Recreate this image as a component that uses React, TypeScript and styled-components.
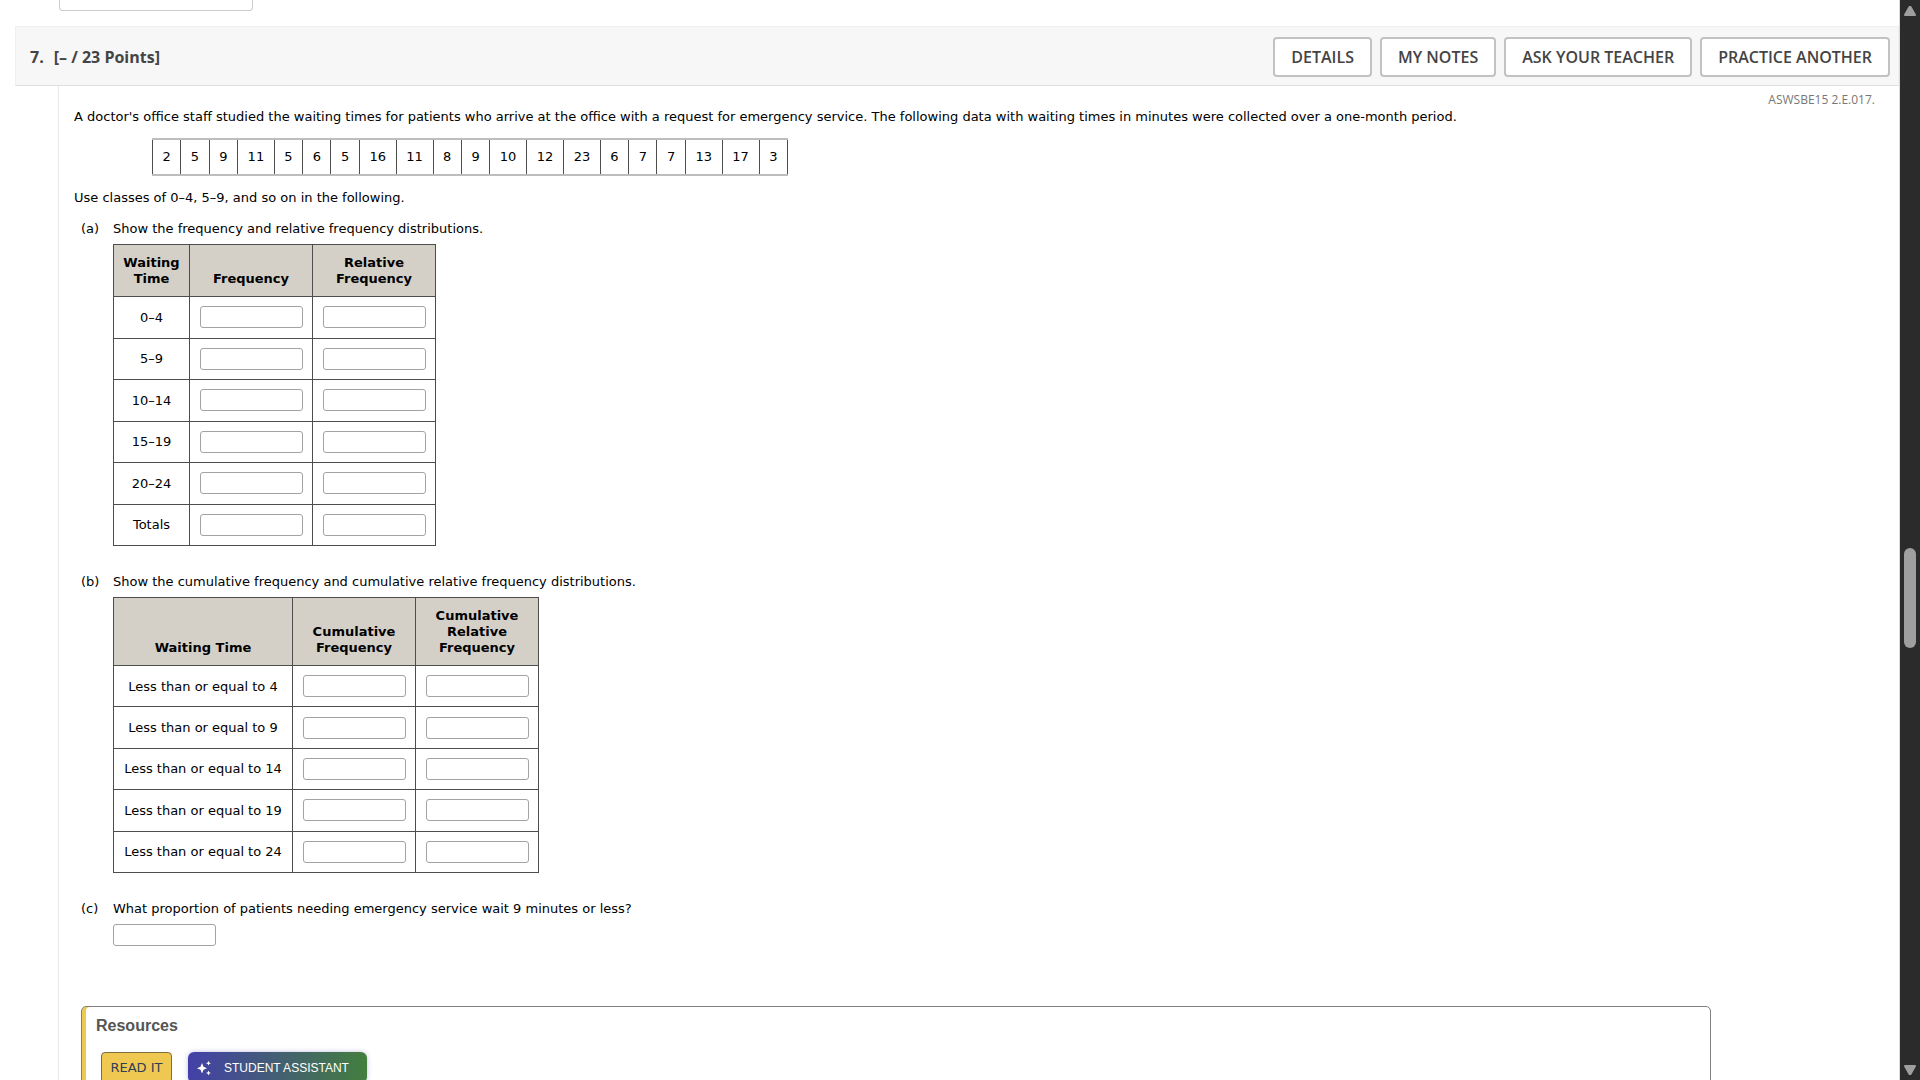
import React from "react";
import styled, { createGlobalStyle } from "styled-components";

const GlobalStyle = createGlobalStyle`
  *, *::before, *::after { box-sizing: border-box; }
  html, body, #root { height: 100%; }
  body {
    margin: 0;
    overflow: hidden;
    background: #fff;
    color: #000;
    font: 13px/16px Verdana, "DejaVu Sans", sans-serif;
  }
`;

const Page = styled.div`
  display: flex;
  height: 100vh;
  overflow: hidden;
`;

const Main = styled.main`
  flex: 1;
  min-width: 0;
  overflow: hidden;
  padding-left: 15px;
  border-right: 1px solid #dcdcdc;
`;

const PreviousAnswer = styled.input`
  display: block;
  width: 194px;
  height: 11px;
  margin: 0 0 15px 44px;
  border: 1px solid #ccc;
  border-top: 0;
  border-radius: 0 0 4px 4px;
  outline: 0;
`;

const QuestionHeader = styled.header`
  display: flex;
  align-items: center;
  justify-content: space-between;
  height: 60px;
  padding: 2px 8px 0 14px;
  background: #f7f7f7;
  border: 1px solid #f0f0f0;
  border-bottom-color: #e0e0e0;
`;

const Title = styled.h2`
  display: flex;
  gap: 10px;
  margin: 0;
  color: #444;
  font: bold 16px/22px "Open Sans", sans-serif;
`;

const Actions = styled.div`
  display: flex;
  gap: 8px;
`;

const ActionButton = styled.button`
  height: 40px;
  padding: 0 16px;
  border: 2px solid #c2c2c2;
  border-radius: 4px;
  background: #fff;
  color: #444;
  font: 600 16px/22px "Open Sans", sans-serif;
`;

const Question = styled.section`
  min-height: 1000px;
  margin-left: 43px;
  padding: 5px 24px 0 15px;
  border-left: 1px solid #e8e8e8;
`;

const Source = styled.div`
  color: #777;
  text-align: right;
  font: 12px/18px "Open Sans", sans-serif;
`;

const Text = styled.p`
  margin: 0;
`;

const Grid = styled.table`
  border-collapse: collapse;
  text-align: center;

  th, td {
    border: 1px solid #4d4d4d;
  }
`;

const DataTable = styled(Grid)`
  width: 636px;
  height: 38px;
  margin: 13px 0 14px 78px;

  td {
    padding: 0 9px;
    border-top: 2px solid #bdbdbd;
    border-bottom: 2px solid #bdbdbd;
  }
`;

const Parts = styled.ol`
  margin: 15px 0 0;
  padding: 0 0 0 7px;
  list-style: none;
`;

const Part = styled.li`
  display: grid;
  grid-template-columns: 32px 1fr;
  margin-bottom: 28px;
`;

const AnswerTable = styled(Grid)<{ $height: number }>`
  height: ${(p) => p.$height}px;
  margin-top: 7px;

  td { padding: 0 9px; }

  thead th {
    padding: 10px 9px 9px;
    background: #d4d0c8;
    font-weight: bold;
    vertical-align: bottom;
  }

  tbody th {
    padding: 1px 9px 0;
    font-weight: normal;
  }

  tbody tr { height: 41px; }
`;

const HeadCell = styled.th<{ $width: number }>`
  width: ${(p) => p.$width}px;
`;

const Answer = styled.input`
  display: block;
  width: 103px;
  height: 22px;
  margin: 0 auto;
  padding: 1px 4px;
  border: 1px solid #a3a3a3;
  border-radius: 3px;
  background: #fff;
  font: inherit;
`;

const PartAnswer = styled(Answer)`
  margin: 7px 0 0;
`;

const Resources = styled.section`
  height: 120px;
  margin: 60px 164px 0 7px;
  padding: 9px 14px;
  border: 1px solid #7f7f7f;
  border-radius: 5px;
  box-shadow: inset 4px 0 0 #efc851;
`;

const ResourcesTitle = styled.h3`
  margin: 0 0 16px;
  color: #555;
  font: bold 16px/20px "Liberation Sans", Arial, sans-serif;
`;

const ResourceButtons = styled.div`
  display: flex;
  gap: 16px;
  padding-left: 5px;
`;

const ReadButton = styled.button`
  height: 31px;
  min-width: 71px;
  padding: 0 8px;
  border: 1px solid #7d6e3d;
  border-radius: 4px;
  background: #efc851;
  color: #2f3e55;
  font: 13px/16px Verdana, "DejaVu Sans", sans-serif;
`;

const AssistantButton = styled.button`
  display: flex;
  align-items: center;
  gap: 12px;
  height: 31px;
  min-width: 179px;
  padding: 0 12px 0 8px;
  border: 0;
  border-radius: 6px;
  background: linear-gradient(90deg, #4340a8, #437e3e);
  box-shadow: 0 0 5px #4340a855;
  color: #fff;
  font: 12px/16px "Liberation Sans", Arial, sans-serif;
`;

const Scrollbar = styled.div`
  display: flex;
  flex-direction: column;
  align-items: center;
  justify-content: space-between;
  width: 20px;
  padding: 6px 0 5px;
  background: #2b2b2b;
`;

const Thumb = styled.div`
  width: 12px;
  height: 100px;
  margin-top: 114px;
  border-radius: 6px;
  background: #9f9f9f;
`;

const data = [2, 5, 9, 11, 5, 6, 5, 16, 11, 8, 9, 10, 12, 23, 6, 7, 7, 13, 17, 3];

type Column = { width: number; lines: string[] };

const frequencyColumns: Column[] = [
  { width: 76, lines: ["Waiting", "Time"] },
  { width: 123, lines: ["Frequency"] },
  { width: 123, lines: ["Relative", "Frequency"] },
];
const frequencyRows = ["0–4", "5–9", "10–14", "15–19", "20–24", "Totals"];

const cumulativeColumns: Column[] = [
  { width: 179, lines: ["Waiting Time"] },
  { width: 123, lines: ["Cumulative", "Frequency"] },
  { width: 123, lines: ["Cumulative", "Relative", "Frequency"] },
];
const cumulativeRows = [4, 9, 14, 19, 24].map((n) => `Less than or equal to ${n}`);

function Distribution({ columns, rows, height }: { columns: Column[]; rows: string[]; height: number }) {
  return (
    <AnswerTable $height={height}>
      <thead>
        <tr>
          {columns.map((c, i) => (
            <HeadCell key={i} scope="col" $width={c.width}>
              {c.lines.map((line, n) => (
                <React.Fragment key={line}>
                  {n > 0 && <br />}
                  {line}
                </React.Fragment>
              ))}
            </HeadCell>
          ))}
        </tr>
      </thead>
      <tbody>
        {rows.map((row) => (
          <tr key={row}>
            <th scope="row">{row}</th>
            {columns.slice(1).map((c, i) => (
              <td key={i}>
                <Answer type="text" aria-label={`${row}, ${c.lines.join(" ")}`} />
              </td>
            ))}
          </tr>
        ))}
      </tbody>
    </AnswerTable>
  );
}

function Sparkles() {
  return (
    <svg width="16" height="16" viewBox="0 0 16 16" fill="#fff" aria-hidden="true">
      <path d="M6 3 L7.5 6.7 L11 8.2 L7.5 9.7 L6 13.4 L4.5 9.7 L1 8.2 L4.5 6.7 Z" />
      <path d="M12.5 .8 L13.2 2.5 L15 3.2 L13.2 3.9 L12.5 5.6 L11.8 3.9 L10 3.2 L11.8 2.5 Z" />
      <path d="M12.5 10.6 L13.2 12.3 L15 13 L13.2 13.7 L12.5 15.4 L11.8 13.7 L10 13 L11.8 12.3 Z" />
    </svg>
  );
}

function Arrow({ down }: { down?: boolean }) {
  return (
    <svg width="12" height="10" viewBox="0 0 12 10" fill="#9f9f9f" stroke="#9f9f9f" strokeWidth="2" strokeLinejoin="round" aria-hidden="true">
      <path d={down ? "M1 1H11L6.5 9H5.5Z" : "M1 9H11L6.5 1H5.5Z"} />
    </svg>
  );
}

export default function App() {
  return (
    <Page>
      <GlobalStyle />
      <Main>
        <PreviousAnswer type="text" aria-label="Previous answer" />
        <QuestionHeader>
          <Title>
            <span>7.</span>
            <span>[– / 23 Points]</span>
          </Title>
          <Actions>
            {["DETAILS", "MY NOTES", "ASK YOUR TEACHER", "PRACTICE ANOTHER"].map((label) => (
              <ActionButton key={label} type="button">{label}</ActionButton>
            ))}
          </Actions>
        </QuestionHeader>
        <Question>
          <Source>ASWSBE15 2.E.017.</Source>
          <Text>
            A doctor's office staff studied the waiting times for patients who arrive at the office with a request for
            emergency service. The following data with waiting times in minutes were collected over a one-month period.
          </Text>
          <DataTable>
            <tbody>
              <tr>
                {data.map((value, i) => (
                  <td key={i}>{value}</td>
                ))}
              </tr>
            </tbody>
          </DataTable>
          <Text>Use classes of 0–4, 5–9, and so on in the following.</Text>
          <Parts>
            <Part>
              <span>(a)</span>
              <div>
                <Text>Show the frequency and relative frequency distributions.</Text>
                <Distribution columns={frequencyColumns} rows={frequencyRows} height={302} />
              </div>
            </Part>
            <Part>
              <span>(b)</span>
              <div>
                <Text>Show the cumulative frequency and cumulative relative frequency distributions.</Text>
                <Distribution columns={cumulativeColumns} rows={cumulativeRows} height={276} />
              </div>
            </Part>
            <Part>
              <span>(c)</span>
              <div>
                <label htmlFor="proportion">
                  What proportion of patients needing emergency service wait 9 minutes or less?
                </label>
                <PartAnswer id="proportion" type="text" />
              </div>
            </Part>
          </Parts>
          <Resources>
            <ResourcesTitle>Resources</ResourcesTitle>
            <ResourceButtons>
              <ReadButton type="button">READ IT</ReadButton>
              <AssistantButton type="button">
                <Sparkles />
                STUDENT ASSISTANT
              </AssistantButton>
            </ResourceButtons>
          </Resources>
        </Question>
      </Main>
      <Scrollbar>
        <Arrow />
        <Thumb />
        <Arrow down />
      </Scrollbar>
    </Page>
  );
}
